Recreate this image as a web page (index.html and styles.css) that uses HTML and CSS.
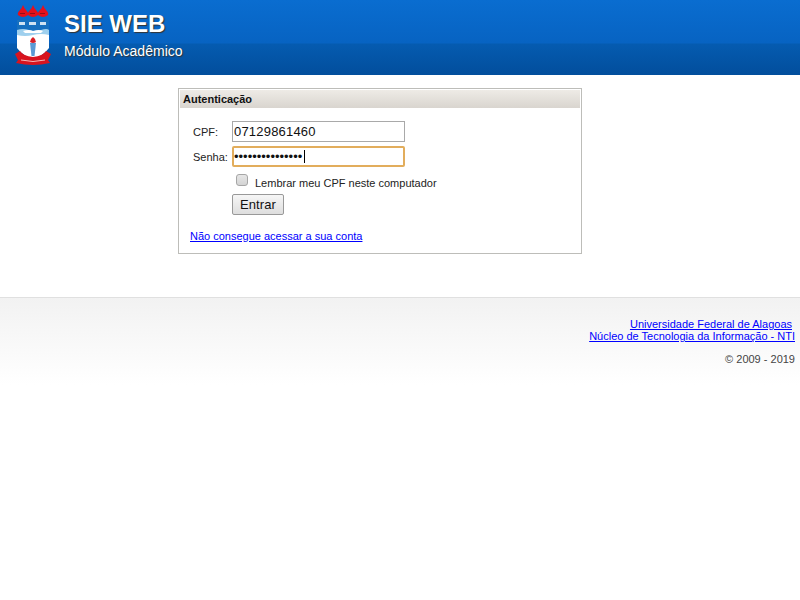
FILE: index.html
```html
<!DOCTYPE html>
<html lang="pt-BR">
<head>
    <meta charset="UTF-8">
    <title>SIE WEB - Módulo Acadêmico</title>
    <link rel="stylesheet" href="styles.css">
</head>
<body>
    <div class="header">
        <svg class="logo" width="36" height="62" viewBox="0 0 36 62">
            <path d="M8 1 Q9 4 11 6 Q14 9 13 11 Q8 15 3 11 Q2 9 5 6 Q7 4 8 1 Z" fill="#e4101c"/>
            <path d="M18 1 Q19 4 21 6 Q24 9 23 11 Q18 15 13 11 Q12 9 15 6 Q17 4 18 1 Z" fill="#e4101c"/>
            <path d="M28 1 Q29 4 31 6 Q34 9 33 11 Q28 15 23 11 Q22 9 25 6 Q27 4 28 1 Z" fill="#e4101c"/>
            <path d="M5 9 h5 v1 h-5 Z M15 9 h5 v1 h-5 Z M25 9 h5 v1 h-5 Z" fill="#8f1018"/>
            <path d="M2 16 H34 V44 Q28 52 18 55 Q8 52 2 44 Z" fill="#fff"/>
            <path d="M2 16 H34 V30 H2 Z" fill="#1670bf"/>
            <path d="M4 18 h6 v3 h-6 Z M14 18 h7 v3 h-7 Z M25 18 h6 v3 h-6 Z" fill="#cfe3f2"/>
            <path d="M2 26 Q8 24 14 26 T26 26 T34 26 V31 Q26 29 18 31 T2 31 Z" fill="#9fd0ee"/>
            <path d="M8 27 Q14 25 18 27 Q24 25 28 27 L26 29 H10 Z" fill="#fff"/>
            <path d="M15 39 H21 L19.5 52 H16.5 Z" fill="#5c9bd4"/>
            <path d="M18 33 Q21 35 21 38 Q18 40 15 38 Q15 35 18 33 Z" fill="#d81f26"/>
            <path d="M0 50 L5 47 Q8 52 18 53 Q28 52 31 47 L36 50 L33 56 L35 59 Q18 63 1 59 L3 56 Z" fill="#d8141f"/>
            <path d="M6 56 Q18 59 30 56" stroke="#f4b6b6" stroke-width="1" fill="none"/>
        </svg>
        <div class="header-text">
            <div class="title">SIE WEB</div>
            <div class="subtitle">Módulo Acadêmico</div>
        </div>
    </div>

    <div class="login-box">
        <div class="box-title">Autenticação</div>
        <form class="box-body">
            <div class="row">
                <label for="cpf">CPF:</label>
                <input id="cpf" class="field" type="text" value="07129861460">
            </div>
            <div class="row">
                <label for="senha">Senha:</label>
                <span class="field-wrap">
                    <input id="senha" class="field field-pass" type="password" value="111111111111111" autofocus>
                    <span class="caret"></span>
                </span>
            </div>
            <div class="remember">
                <input id="lembrar" type="checkbox">
                <label for="lembrar">Lembrar meu CPF neste computador</label>
            </div>
            <button class="btn" type="button">Entrar</button>
            <a class="help-link" href="#">Não consegue acessar a sua conta</a>
        </form>
    </div>

    <div class="footer">
        <div class="footer-links">
            <a class="uni-link" href="#">Universidade Federal de Alagoas</a>
            <a href="#">Núcleo de Tecnologia da Informação - NTI</a>
        </div>
        <div class="copyright">© 2009 - 2019</div>
    </div>
</body>
</html>
```

FILE: styles.css
```css
body {
    margin: 0;
    font-family: "Liberation Sans", Arial, sans-serif;
    font-size: 11px;
    color: #222;
    background-color: #fff;
}
a {
    color: #0000ff;
}
.header {
    height: 75px;
    box-sizing: border-box;
    display: flex;
    padding: 4px 0 0 15px;
    background: linear-gradient(#0a6dd0 0, #0763c2 43px, #055bb0 44px, #024e9c 75px);
}
.header-text {
    margin-left: 13px;
    color: #fff;
    text-shadow: 1px 1px 1px #333;
}
.title {
    margin-top: 6px;
    font-size: 24px;
    line-height: 28px;
    font-weight: bold;
}
.subtitle {
    margin-top: 4px;
    font-size: 14px;
    line-height: 18px;
    letter-spacing: 0.02px;
}
.login-box {
    width: 400px;
    height: 162px;
    margin: 13px 0 0 178px;
    padding: 1px;
    border: 1px solid #bdbdb9;
}
.box-title {
    height: 18px;
    padding-left: 3px;
    font-size: 11px;
    font-weight: bold;
    line-height: 19px;
    color: #111;
    background: linear-gradient(#eeebe6, #d9d5cf);
}
.box-body {
    display: flex;
    flex-direction: column;
    padding: 13px 0 0 10px;
}
.row {
    display: flex;
    align-items: center;
    height: 21px;
    margin-bottom: 4px;
}
.row label {
    width: 39px;
    margin-left: 3px;
}
.field-wrap {
    position: relative;
    display: flex;
}
.field {
    box-sizing: border-box;
    width: 173px;
    height: 21px;
    padding: 0 1px;
    border: 1px solid #a9a9a9;
    font-family: "Liberation Sans", Arial, sans-serif;
    font-size: 13px;
    letter-spacing: 0.2px;
    color: #111;
    outline: none;
}
.field-pass {
    letter-spacing: 0;
    caret-color: transparent;
}
.field-pass:focus {
    border: 2px solid #e2ad5c;
    border-radius: 2px;
    padding: 0;
}
.caret {
    position: absolute;
    left: 72px;
    top: 4px;
    width: 1px;
    height: 13px;
    background-color: #000;
}
.remember {
    display: flex;
    align-items: center;
    height: 20px;
    margin: 2px 0 0 46px;
}
.remember input {
    appearance: none;
    box-sizing: border-box;
    width: 12px;
    height: 12px;
    margin: 0 7px 7px 0;
    border: 1px solid #a6a6a6;
    border-radius: 3px;
    background: linear-gradient(#e6e6e6, #d4d4d4);
}
.btn {
    width: 52px;
    height: 21px;
    margin: 1px 0 0 42px;
    padding: 0;
    border: 1px solid #999;
    border-radius: 2px;
    background: linear-gradient(#f6f6f6, #dedede);
    font-family: "Liberation Sans", Arial, sans-serif;
    font-size: 13px;
    letter-spacing: 0.1px;
    color: #111;
    align-self: flex-start;
}
.help-link {
    margin-top: 15px;
    font-size: 11px;
    line-height: 13px;
    align-self: flex-start;
}
.footer {
    margin-top: 43px;
    height: 88px;
    box-sizing: border-box;
    padding: 20px 5px 0 0;
    border-top: 1px solid #e0e0e0;
    text-align: right;
    background: linear-gradient(#f2f2f2, #fff);
}
.footer-links a {
    display: block;
    line-height: 12px;
}
.footer-links .uni-link {
    margin-right: 3px;
}
.copyright {
    margin-top: 11px;
    line-height: 13px;
    color: #444;
}
```
